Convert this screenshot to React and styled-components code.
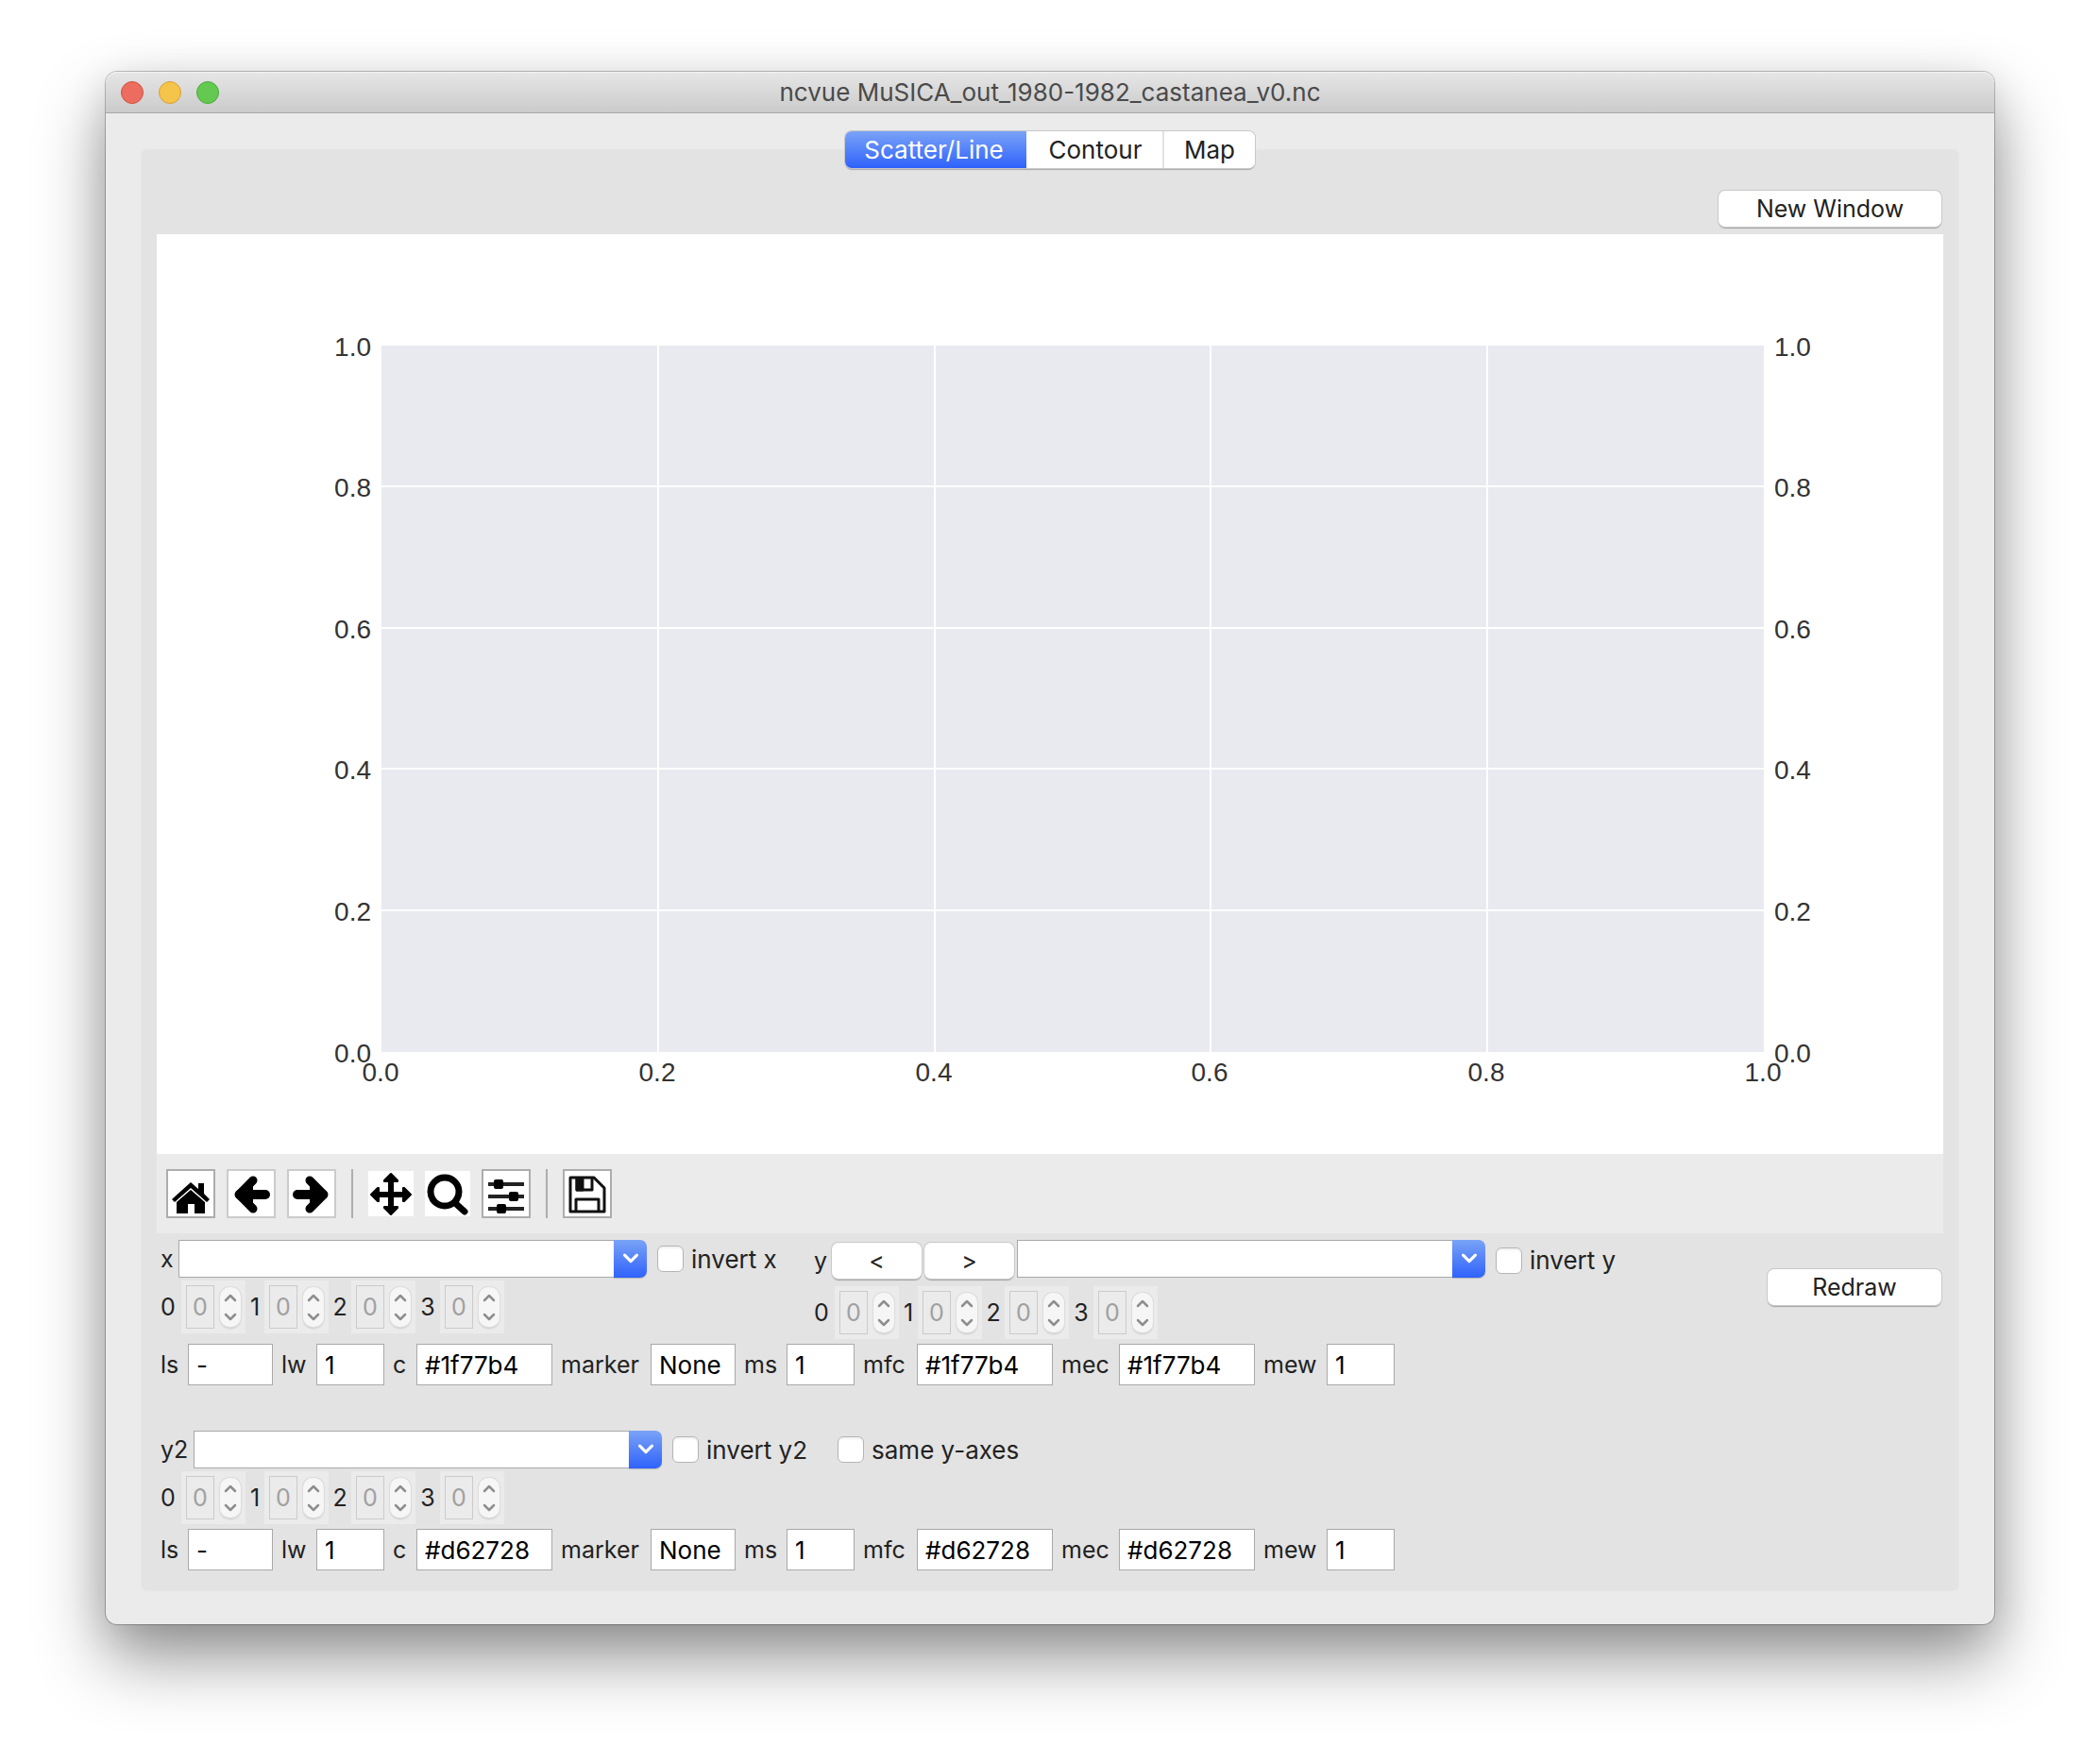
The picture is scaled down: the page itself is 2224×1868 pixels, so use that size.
import React from "react";
import styled, { createGlobalStyle, css } from "styled-components";

const ui = '"Inter", "Roboto", sans-serif';

const GlobalStyle = createGlobalStyle`
  * { box-sizing: border-box; }
  body { margin: 0; background: #fff; font-family: ${ui}; }
  button, input, label { font-family: inherit; font-size: 25px; color: #222; }
`;

const Desktop = styled.div`
  padding: 76px 112px 146px;
  background: #fff;
  overflow: hidden;
`;

const Window = styled.main`
  border-radius: 12px;
  background: #ebebeb;
  box-shadow: 0 0 0 1px rgba(0, 0, 0, 0.24), 0 36px 72px rgba(0, 0, 0, 0.42), 0 8px 40px rgba(0, 0, 0, 0.1);
`;

const TitleBar = styled.header`
  display: grid;
  grid-template-columns: 1fr auto 1fr;
  align-items: center;
  height: 44px;
  padding: 0 16px;
  border-radius: 12px 12px 0 0;
  border-bottom: 1px solid #a6a6a6;
  background: linear-gradient(#e6e6e6, #cbcbcb);
  box-shadow: inset 0 1px #f4f4f4;
`;

const Lights = styled.div`
  display: flex;
  gap: 16px;
`;

const Light = styled.button`
  width: 24px;
  height: 24px;
  padding: 0;
  border: 1px solid ${(p) => p.$edge};
  border-radius: 50%;
  background: ${(p) => p.$fill};
`;

const Title = styled.h1`
  margin: 0;
  font-size: 26px;
  line-height: 32px;
  font-weight: 400;
  color: #4a4a4a;
`;

const Body = styled.div`
  padding: 19px 37px 35px;
`;

const Tabs = styled.div`
  position: relative;
  display: flex;
  width: fit-content;
  margin: 0 auto -20px;
  border-radius: 7px;
  background: #fff;
  box-shadow: 0 0 0 1px #c8c8c8, 0 2px 1px rgba(0, 0, 0, 0.25);
  overflow: hidden;
`;

const Tab = styled.button`
  height: 39px;
  padding: 0;
  width: ${(p) => p.$width}px;
  border: 0;
  border-left: 2px solid ${(p) => (p.$line ? "#e2e2e2" : "transparent")};
  background: #fff;
  font-size: 26px;
  ${(p) =>
    p.$active &&
    css`
      border: 0;
      padding-right: 4px;
      color: #fff;
      background: linear-gradient(#7aa3f7, #2f62fb);
    `}
`;

const Pane = styled.section`
  padding: 42px 17px 22px;
  border-radius: 7px;
  background: #e3e3e3;
  box-shadow: inset 0 0 0 1px #e6e6e6;
`;

const PushButton = styled.button`
  flex: none;
  width: ${(p) => p.$width}px;
  height: 38px;
  padding: 0;
  border: 0;
  border-radius: 7px;
  background: #fff;
  box-shadow: 0 0 0 1px #c9c9c9, 0 2px 1px rgba(0, 0, 0, 0.28);
`;

const TopRow = styled.div`
  display: flex;
  justify-content: flex-end;
  padding: 2px 2px 8px;
`;

const Figure = styled.div`
  background: #fff;
`;

const Plot = styled.svg`
  display: block;
  width: 100%;
  height: auto;
  font-family: "Liberation Sans", Arial, sans-serif;
  font-size: 28px;
  fill: #333;
`;

const Toolbar = styled.div`
  display: flex;
  align-items: center;
  gap: 12px;
  height: 84px;
  padding: 0 10px;
  background: #ebebeb;
`;

const Tool = styled.button`
  display: grid;
  place-items: center;
  width: ${(p) => (p.$edge ? 52 : 48)}px;
  height: ${(p) => (p.$edge ? 52 : 48)}px;
  padding: 0;
  border: ${(p) => (p.$edge ? `2px solid ${p.$edge}` : "0")};
  background: #fff;
`;

const Divider = styled.span`
  width: 2px;
  height: 52px;
  margin: 0 4px;
  background: #adadad;
`;

const Controls = styled.div`
  display: flex;
  justify-content: space-between;
  padding: 7px 2px 0 3px;
`;

const Side = styled.div`
  padding-top: 31px;
`;

const Axes = styled.div`
  display: flex;
  height: 110px;
`;

const AxisBlock = styled.div`
  flex: none;
  min-width: 692px;
`;

const Line = styled.div`
  display: flex;
  align-items: center;
  height: ${(p) => p.$height || 40}px;
`;

const Caption = styled.label`
  flex: none;
  width: ${(p) => p.$width}px;
  padding-left: 1px;
`;

const Combo = styled.div`
  display: flex;
  flex: none;
  align-self: flex-start;
  width: 496px;
  height: 40px;
`;

const ComboInput = styled.input`
  flex: 1;
  min-width: 0;
  padding: 0 8px;
  border: 1px solid #a9a9a9;
  border-right: 0;
  border-radius: 0;
  background: #fff;
  outline: 0;
`;

const ComboButton = styled.button`
  display: grid;
  place-items: center;
  width: 35px;
  padding: 0;
  border: 0;
  border-radius: 0 7px 7px 0;
  background: linear-gradient(#7aa3f7, #2f62fb);
  box-shadow: 0 1px 1px rgba(0, 0, 0, 0.2);
`;

const Check = styled.label`
  display: flex;
  align-items: center;
  gap: 8px;
  margin-left: ${(p) => p.$gap || 11}px;
  font-size: 26px;
  white-space: nowrap;
`;

const Box = styled.input`
  appearance: none;
  width: 28px;
  height: 28px;
  margin: 0;
  border: 1px solid #b5b5b5;
  border-radius: 6px;
  background: #fff;
  box-shadow: inset 0 2px 2px rgba(0, 0, 0, 0.06);
`;

const StepButtons = styled.div`
  display: flex;
  flex: none;
  gap: 3px;
  margin-right: 3px;
`;

const Dims = styled.div`
  display: grid;
  grid-template-columns: 23px 68px 20px 68px 24px 68px 26px 68px;
  align-items: center;
  height: 56px;
  margin-top: ${(p) => p.$gap || 3}px;
`;

const DimLabel = styled.label`
  text-align: ${(p) => (p.$first ? "left" : "center")};
  padding-left: ${(p) => (p.$first ? 1 : 0)}px;
`;

const Spin = styled.div`
  display: flex;
  align-items: center;
  gap: 6px;
  height: 56px;
  padding: 0 5px;
  background: #ebebeb;
`;

const SpinInput = styled.input`
  width: 30px;
  height: 46px;
  padding: 0;
  border: 1px solid #cbcbcb;
  border-radius: 0;
  background: #ebebeb;
  color: #a0a0a0;
  text-align: center;
`;

const Stepper = styled.div`
  display: flex;
  flex-direction: column;
  width: 23px;
  height: 42px;
  border-radius: 10px;
  background: #f6f6f6;
  box-shadow: 0 0 0 1px #dcdcdc, 0 2px 2px rgba(0, 0, 0, 0.14);
`;

const StepArrow = styled.button`
  display: grid;
  place-items: center;
  flex: 1;
  padding: 0;
  border: 0;
  background: transparent;
`;

const Styles = styled.div`
  display: grid;
  grid-template-columns: 30px 90px 46px 72px 34px 144px 104px 90px 54px 72px 66px 144px 70px 144px 76px 72px;
  align-items: center;
  width: fit-content;
  margin-top: ${(p) => p.$gap || 0}px;
`;

const StyleLabel = styled.label`
  padding-left: ${(p) => (p.$first ? 1 : 9)}px;
  white-space: nowrap;
`;

const StyleInput = styled.input`
  width: 100%;
  height: 44px;
  padding: 0 8px;
  border: 1px solid #a9a9a9;
  border-radius: 0;
  background: #fff;
  font-size: 26px;
  color: #000;
`;

const SecondBlock = styled.div`
  margin-top: 48px;
`;

const HomeIcon = () => (
  <svg width="48" height="48" viewBox="0 0 48 48">
    <path d="M24 12 32 19V13H38V24L44 30 41 33 24 18 7 33 4 30Z" />
    <path d="M24 20 39 33V45H28V35H21V45H9V33Z" />
  </svg>
);

const ArrowIcon = ({ flip }) => (
  <svg width="48" height="48" viewBox="0 0 48 48">
    <g transform={flip ? "matrix(-1 0 0 1 48 0)" : undefined} stroke="#000" strokeLinecap="round" strokeLinejoin="round">
      <path d="M26 10 11 25 26 40" strokeWidth="9" />
      <path d="M12 25H39" strokeWidth="10" />
    </g>
  </svg>
);

const MoveIcon = () => (
  <svg width="48" height="48" viewBox="0 0 48 48">
    <path
      stroke="#000"
      strokeWidth="2"
      strokeLinejoin="round"
      d="M24 3 31 10V11H26V23H37V18H38L45 25 38 32H37V27H26V38H31V39L24 46 17 39V38H22V27H11V32H10L3 25 10 18H11V23H22V11H17V10Z"
    />
  </svg>
);

const ZoomIcon = () => (
  <svg width="48" height="48" viewBox="0 0 48 48" fill="none" stroke="#000">
    <circle cx="21" cy="22" r="15" strokeWidth="7" />
    <path d="M32 34 42 43" strokeWidth="7" strokeLinecap="round" />
  </svg>
);

const SlidersIcon = () => (
  <svg width="48" height="48" viewBox="0 0 48 48">
    <path d="M5 12H43V16H5ZM5 25H43V29H5ZM5 38H43V42H5Z" fill="#222" />
    <rect x="11" y="9" width="10" height="10" rx="2" />
    <rect x="27" y="22" width="10" height="10" rx="2" />
    <rect x="14" y="35" width="10" height="10" rx="2" />
  </svg>
);

const SaveIcon = () => (
  <svg width="48" height="48" viewBox="0 0 48 48" fill="none" stroke="#111" strokeWidth="3" strokeLinejoin="round">
    <path d="M6 7H31L42 18V43H6Z" />
    <path d="M13 8V20H29V8" />
    <path d="M12 43V30H36V43" />
    <path d="M13 8H19V20H13Z" fill="#111" />
  </svg>
);

const Chevron = ({ up, color, size = 14 }) => (
  <svg width={size} height={size} viewBox="0 0 14 14" fill="none" stroke={color} strokeWidth="2.5" strokeLinecap="round" strokeLinejoin="round">
    <path d={up ? "M2 10 7 5 12 10" : "M2 4 7 9 12 4"} />
  </svg>
);

const ticks = [0, 1, 2, 3, 4, 5];

function EmptyPlot() {
  const left = 238;
  const right = 1702;
  const top = 118;
  const bottom = 866;
  const xAt = (i) => Math.round(left + ((right - left) * i) / 5);
  const yAt = (i) => Math.floor(bottom - ((bottom - top) * i) / 5);
  const name = (i) => (i / 5).toFixed(1);
  return (
    <Plot viewBox="0 0 1892 974" role="img" aria-label="Empty plot">
      <rect x={left} y={top} width={right - left} height={bottom - top} fill="#e9e9f0" />
      {ticks.slice(1, 5).map((i) => (
        <g key={i} stroke="#fff" strokeWidth="2">
          <path d={`M${xAt(i)} ${top}V${bottom}`} />
          <path d={`M${left} ${yAt(i)}H${right}`} />
        </g>
      ))}
      {ticks.map((i) => (
        <g key={i}>
          <text x={left - 11} y={yAt(i) + 11} textAnchor="end">{name(i)}</text>
          <text x={right + 11} y={yAt(i) + 11}>{name(i)}</text>
          <text x={xAt(i) - 1} y={bottom + 31} textAnchor="middle">{name(i)}</text>
        </g>
      ))}
    </Plot>
  );
}

function ComboBox({ id }) {
  return (
    <Combo>
      <ComboInput id={id} type="text" />
      <ComboButton type="button" aria-label="Show variables">
        <Chevron color="#fff" size={18} />
      </ComboButton>
    </Combo>
  );
}

function Dimensions({ axis, gap }) {
  return (
    <Dims $gap={gap}>
      {[0, 1, 2, 3].map((n) => (
        <React.Fragment key={n}>
          <DimLabel htmlFor={`${axis}-dim-${n}`} $first={n === 0}>{n}</DimLabel>
          <Spin>
            <SpinInput id={`${axis}-dim-${n}`} type="text" defaultValue="0" disabled />
            <Stepper>
              <StepArrow type="button" aria-label="Increase" disabled><Chevron up color="#8e8e8e" /></StepArrow>
              <StepArrow type="button" aria-label="Decrease" disabled><Chevron color="#8e8e8e" /></StepArrow>
            </Stepper>
          </Spin>
        </React.Fragment>
      ))}
    </Dims>
  );
}

function LineStyle({ axis, color, gap }) {
  const fields = [
    ["ls", "-"], ["lw", "1"], ["c", color], ["marker", "None"],
    ["ms", "1"], ["mfc", color], ["mec", color], ["mew", "1"],
  ];
  return (
    <Styles $gap={gap}>
      {fields.map(([name, value], i) => (
        <React.Fragment key={name}>
          <StyleLabel htmlFor={`${axis}-${name}`} $first={i === 0}>{name}</StyleLabel>
          <StyleInput id={`${axis}-${name}`} type="text" defaultValue={value} />
        </React.Fragment>
      ))}
    </Styles>
  );
}

export default function App() {
  return (
    <>
      <GlobalStyle />
      <Desktop>
        <Window>
          <TitleBar>
            <Lights>
              <Light aria-label="Close" $fill="#ec6d5f" $edge="#d0503f" />
              <Light aria-label="Minimize" $fill="#f5c44b" $edge="#d8a032" />
              <Light aria-label="Zoom" $fill="#63c951" $edge="#4ba93a" />
            </Lights>
            <Title>ncvue MuSICA_out_1980-1982_castanea_v0.nc</Title>
          </TitleBar>
          <Body>
            <Tabs role="tablist">
              <Tab role="tab" aria-selected="true" $active $width={192}>Scatter/Line</Tab>
              <Tab role="tab" aria-selected="false" $width={144}>Contour</Tab>
              <Tab role="tab" aria-selected="false" $line $width={98}>Map</Tab>
            </Tabs>
            <Pane>
              <TopRow>
                <PushButton type="button" $width={236}>New Window</PushButton>
              </TopRow>
              <Figure>
                <EmptyPlot />
              </Figure>
              <Toolbar>
                <Tool aria-label="Home" $edge="#adadad"><HomeIcon /></Tool>
                <Tool aria-label="Back" $edge="#cbcbcb"><ArrowIcon /></Tool>
                <Tool aria-label="Forward" $edge="#cbcbcb"><ArrowIcon flip /></Tool>
                <Divider />
                <Tool aria-label="Pan"><MoveIcon /></Tool>
                <Tool aria-label="Zoom to rectangle"><ZoomIcon /></Tool>
                <Tool aria-label="Configure subplots" $edge="#adadad"><SlidersIcon /></Tool>
                <Divider />
                <Tool aria-label="Save" $edge="#adadad"><SaveIcon /></Tool>
              </Toolbar>
              <Controls>
                <div>
                  <Axes>
                    <AxisBlock>
                      <Line>
                        <Caption htmlFor="x-var" $width={20}>x</Caption>
                        <ComboBox id="x-var" />
                        <Check><Box type="checkbox" />invert x</Check>
                      </Line>
                      <Dimensions axis="x" />
                    </AxisBlock>
                    <AxisBlock>
                      <Line $height={43}>
                        <Caption htmlFor="y-var" $width={20}>y</Caption>
                        <StepButtons>
                          <PushButton type="button" $width={95}>&lt;</PushButton>
                          <PushButton type="button" $width={95}>&gt;</PushButton>
                        </StepButtons>
                        <ComboBox id="y-var" />
                        <Check><Box type="checkbox" />invert y</Check>
                      </Line>
                      <Dimensions axis="y" gap={6} />
                    </AxisBlock>
                  </Axes>
                  <LineStyle axis="y" color="#1f77b4" />
                  <SecondBlock>
                    <Line>
                      <Caption htmlFor="y2-var" $width={36}>y2</Caption>
                      <ComboBox id="y2-var" />
                      <Check><Box type="checkbox" />invert y2</Check>
                      <Check $gap={32}><Box type="checkbox" />same y-axes</Check>
                    </Line>
                    <Dimensions axis="y2" />
                    <LineStyle axis="y2" color="#d62728" gap={5} />
                  </SecondBlock>
                </div>
                <Side>
                  <PushButton type="button" $width={184}>Redraw</PushButton>
                </Side>
              </Controls>
            </Pane>
          </Body>
        </Window>
      </Desktop>
    </>
  );
}
